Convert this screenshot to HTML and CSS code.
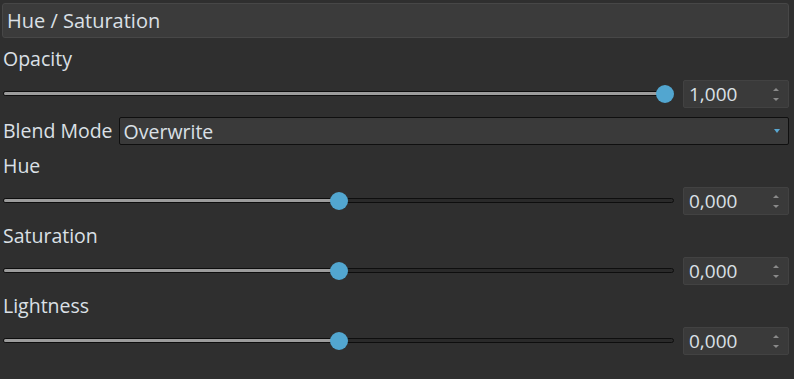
FILE: index.html
```html
<!DOCTYPE html>
<html lang="en">
<head>
  <meta charset="UTF-8" />
  <meta name="viewport" content="width=device-width, initial-scale=1.0"/>
  <title>Hue / Saturation</title>
  <link rel="stylesheet" href="styles.css">
</head>
<body>

  <div class="panel">
    <div class="panel-title">Hue / Saturation</div>

    <div class="label">Opacity</div>
    <div class="slider-row">
      <div class="slider">
        <div class="track"><div class="fill" style="width: 100%"></div></div>
        <div class="thumb-range"><div class="thumb" style="left: 100%"></div></div>
      </div>
      <div class="spin">
        <span class="spin-value">1,000</span>
        <span class="spin-arrows"><i class="up"></i><i class="down"></i></span>
      </div>
    </div>

    <div class="blend-row">
      <div class="label">Blend Mode</div>
      <div class="select">
        <span>Overwrite</span>
        <i class="select-arrow"></i>
      </div>
    </div>

    <div class="label">Hue</div>
    <div class="slider-row">
      <div class="slider">
        <div class="track"><div class="fill" style="width: 50%"></div></div>
        <div class="thumb-range"><div class="thumb" style="left: 50%"></div></div>
      </div>
      <div class="spin">
        <span class="spin-value">0,000</span>
        <span class="spin-arrows"><i class="up"></i><i class="down"></i></span>
      </div>
    </div>

    <div class="label">Saturation</div>
    <div class="slider-row">
      <div class="slider">
        <div class="track"><div class="fill" style="width: 50%"></div></div>
        <div class="thumb-range"><div class="thumb" style="left: 50%"></div></div>
      </div>
      <div class="spin">
        <span class="spin-value">0,000</span>
        <span class="spin-arrows"><i class="up"></i><i class="down"></i></span>
      </div>
    </div>

    <div class="label">Lightness</div>
    <div class="slider-row">
      <div class="slider">
        <div class="track"><div class="fill" style="width: 50%"></div></div>
        <div class="thumb-range"><div class="thumb" style="left: 50%"></div></div>
      </div>
      <div class="spin">
        <span class="spin-value">0,000</span>
        <span class="spin-arrows"><i class="up"></i><i class="down"></i></span>
      </div>
    </div>
  </div>

</body>
</html>
```

FILE: styles.css
```css
body {
  margin: 0;
  background: #2f2f2f;
  font-family: "Open Sans", "Noto Sans", sans-serif;
  font-size: 19.5px;
  color: #dbe0e6;
}

.panel {
  display: flex;
  flex-direction: column;
  gap: 9px;
  padding: 3px 5px 0 2px;
}

.panel-title {
  height: 33px;
  line-height: 33px;
  padding-left: 4px;
  font-size: 20px;
  background: #3b3b3b;
  border: 1px solid #474747;
  border-radius: 3px;
}

.label {
  height: 24px;
  line-height: 24px;
  padding-left: 1px;
}

.slider-row {
  display: flex;
  align-items: center;
  gap: 9px;
  height: 28px;
}

.slider {
  flex: 1;
  position: relative;
  height: 18px;
  margin-left: 1px;
}

.track {
  position: absolute;
  left: 0;
  right: 0;
  top: 6px;
  height: 3px;
  border: 1px solid #0e0e0e;
  border-radius: 3px;
  background: #2a2a2a;
  overflow: hidden;
}

.fill {
  height: 100%;
  background: #9c9c9c;
}

.thumb-range {
  position: absolute;
  left: 9px;
  right: 9px;
  top: 0;
  height: 18px;
}

.thumb {
  position: absolute;
  top: 0;
  width: 18px;
  height: 18px;
  margin-left: -9px;
  border-radius: 50%;
  background: #52a6d0;
}

.spin {
  width: 90px;
  height: 26px;
  display: flex;
  align-items: center;
  justify-content: space-between;
  padding: 0 9px 0 5px;
  background: #3a3a3a;
  border: 1px solid #424242;
  border-radius: 2px;
}

.spin-value {
  line-height: 26px;
  font-size: 19px;
}

.spin-arrows {
  display: flex;
  flex-direction: column;
  gap: 7px;
}

.spin-arrows i {
  width: 0;
  height: 0;
  border-left: 3px solid transparent;
  border-right: 3px solid transparent;
}

.spin-arrows .up {
  border-bottom: 3px solid #8a8a8a;
}

.spin-arrows .down {
  border-top: 3px solid #8a8a8a;
}

.blend-row {
  display: flex;
  align-items: center;
  gap: 6px;
  height: 28px;
}

.select {
  flex: 1;
  height: 26px;
  display: flex;
  align-items: center;
  justify-content: space-between;
  padding: 0 8px 0 4px;
  background: #3a3a3a;
  border: 1px solid #0f0f0f;
  border-radius: 2px;
}

.select-arrow {
  width: 0;
  height: 0;
  border-left: 3px solid transparent;
  border-right: 3px solid transparent;
  border-top: 4px solid #5aa8d2;
}
```
